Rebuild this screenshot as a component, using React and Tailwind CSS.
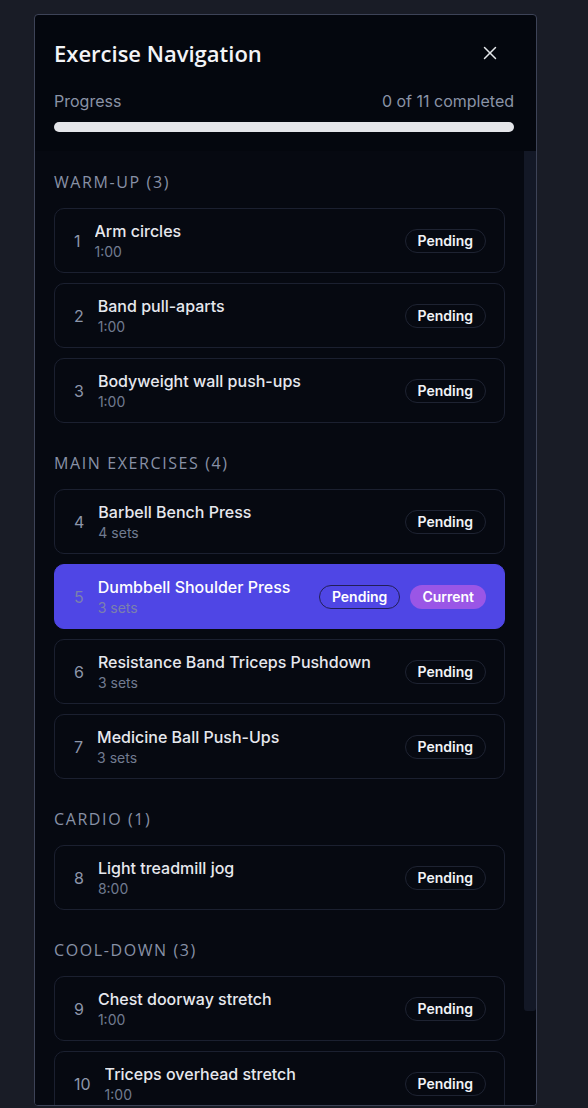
import { X } from 'lucide-react';

const SECTIONS = [
  {
    id: 'warmup',
    title: 'Warm-up',
    items: [
      { n: 1, name: 'Arm circles', meta: '1:00' },
      { n: 2, name: 'Band pull-aparts', meta: '1:00' },
      { n: 3, name: 'Bodyweight wall push-ups', meta: '1:00' },
    ],
  },
  {
    id: 'main',
    title: 'Main Exercises',
    items: [
      { n: 4, name: 'Barbell Bench Press', meta: '4 sets' },
      { n: 5, name: 'Dumbbell Shoulder Press', meta: '3 sets', current: true },
      { n: 6, name: 'Resistance Band Triceps Pushdown', meta: '3 sets' },
      { n: 7, name: 'Medicine Ball Push-Ups', meta: '3 sets' },
    ],
  },
  {
    id: 'cardio',
    title: 'Cardio',
    items: [{ n: 8, name: 'Light treadmill jog', meta: '8:00' }],
  },
  {
    id: 'cooldown',
    title: 'Cool-down',
    items: [
      { n: 9, name: 'Chest doorway stretch', meta: '1:00' },
      { n: 10, name: 'Triceps overhead stretch', meta: '1:00' },
      { n: 11, name: 'Cat-cow stretch', meta: '1:00' },
    ],
  },
];

const HEADING_FONT = { fontFamily: '"Open Sans", "Liberation Sans", sans-serif' };

function ExerciseRow({ item }) {
  const active = !!item.current;
  return (
    <li
      className={`flex items-center rounded-[10px] border px-[18px] pb-[10px] pt-[11px] ${
        active ? 'border-[#4f46e5] bg-[#4f46e5]' : 'border-[#1b2030] bg-transparent'
      }`}
    >
      <span className={`pl-px text-base leading-6 ${active ? 'text-[#7b80ad]' : 'text-[#8d96aa]'}`}>{item.n}</span>
      <div className="ml-3.5 min-w-0 flex-1">
        <p className={`truncate text-base font-medium leading-[22px] ${active ? 'text-white' : 'text-[#e6e8ee]'}`}>
          {item.name}
        </p>
        <p className={`text-sm leading-5 ${active ? 'text-[#7b80ad]' : 'text-[#717b90]'}`}>{item.meta}</p>
      </div>
      <div className="ml-3 flex shrink-0 items-center gap-2.5">
        <span
          className={`flex h-6 items-center rounded-full border px-3 text-sm font-semibold ${
            active ? 'border-[#221f57] text-white' : 'border-[#1e2332] text-[#f1f3f7]'
          }`}
        >
          Pending
        </span>
        {active && (
          <span className="flex h-6 items-center rounded-full bg-[#9a56e6] px-3 text-sm font-semibold text-white">
            Current
          </span>
        )}
      </div>
    </li>
  );
}

export default function App() {
  return (
    <div
      className="min-h-[1108px] bg-[#191c26] pl-[34px] pt-[14px]"
      style={{ fontFamily: 'Inter, "Liberation Sans", sans-serif' }}
    >
      <aside className="flex h-[1092px] w-[503px] flex-col overflow-hidden rounded-[4px] border border-[#3d4357] bg-[#04070e]">
        <header className="pb-[19px] pl-[19px] pr-[22px] pt-6">
          <div className="flex h-7 items-center justify-between">
            <h1 className="text-[22px] font-semibold leading-7 text-[#f3f4f7]" style={HEADING_FONT}>
              Exercise Navigation
            </h1>
            <button className="mr-[6px] flex h-9 w-9 items-center justify-center text-[#e5e7eb]" aria-label="Close">
              <X size={22} strokeWidth={1.6} />
            </button>
          </div>
          <div className="mt-[22px] flex items-center justify-between text-base leading-6 text-[#8a93a6]">
            <span>Progress</span>
            <span>0 of 11 completed</span>
          </div>
          <div className="mt-[9px] h-2.5 rounded-full bg-[#e4e5e9]" />
        </header>

        <div className="flex min-h-0 flex-1 bg-[#060911]">
          <div className="min-w-0 flex-1 overflow-hidden pl-[19px] pr-[19px] pt-[19px]">
            {SECTIONS.map((section, i) => (
              <section key={section.id} className={i === 0 ? '' : 'mt-[28px]'}>
                <h2
                  className="mb-[14px] text-base uppercase leading-6 tracking-widest text-[#8891a6]"
                  style={HEADING_FONT}
                >
                  {section.title} ({section.items.length})
                </h2>
                <ul className="space-y-[10px]">
                  {section.items.map((item) => (
                    <ExerciseRow key={item.n} item={item} />
                  ))}
                </ul>
              </section>
            ))}
          </div>
          <div className="w-3 shrink-0">
            <div className="h-[860px] rounded-b-[3px] bg-[#131826]" />
          </div>
        </div>
      </aside>
    </div>
  );
}
